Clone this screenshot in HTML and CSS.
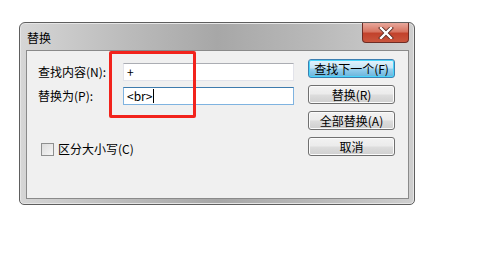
FILE: index.html
```html
<!DOCTYPE html>
<html lang="zh-CN">
<head>
  <meta charset="UTF-8" />
  <title>替换</title>
  <link rel="stylesheet" href="styles.css">
</head>
<body>
  <div class="window">
    <div class="title-bar">
      <span class="title">替换</span>
      <div class="close-btn">
        <svg width="16" height="12" viewBox="0 0 16 12">
          <path d="M3 1 L13 11 M13 1 L3 11" stroke="#5a2a22" stroke-width="4" stroke-linecap="square"></path>
          <path d="M3 1 L13 11 M13 1 L3 11" stroke="#ffffff" stroke-width="2.4" stroke-linecap="square"></path>
        </svg>
      </div>
    </div>

    <div class="client">
      <div class="form-col">
        <div class="row">
          <label class="field-label">查找内容(N):</label>
          <div class="textbox">+</div>
        </div>
        <div class="row">
          <label class="field-label">替换为(P):</label>
          <div class="textbox focused">&lt;br&gt;<span class="caret"></span></div>
        </div>
        <div class="check-row">
          <span class="checkbox"></span>
          <span>区分大小写(C)</span>
        </div>
      </div>
      <div class="button-col">
        <button class="default">查找下一个(F)</button>
        <button>替换(R)</button>
        <button>全部替换(A)</button>
        <button>取消</button>
      </div>
    </div>

    <!-- highlight drawn over the screenshot -->
    <div class="mark"></div>
  </div>
</body>
</html>
```

FILE: styles.css
```css
body {
  margin: 0;
  background: #ffffff;
  font-family: "Noto Sans CJK SC", "DejaVu Sans", sans-serif;
  font-size: 12px;
  color: #000;
}
.window {
  position: relative;
  margin: 22px 0 0 19px;
  width: 394px;
  height: 181px;
  border: 1px solid #5e5e5e;
  border-radius: 6px 6px 5px 5px;
  background: linear-gradient(90deg, #d6d6d6 0%, #bdbdbd 25%, #a7a7a7 50%, #b9b9b9 75%, #cfcfcf 100%);
  box-shadow: inset 0 0 0 1px #e6e6e6;
  padding: 0 5px 5px 6px;
  box-sizing: border-box;
  width: 396px;
  height: 183px;
}
.title-bar {
  height: 27px;
  display: flex;
  justify-content: space-between;
  align-items: flex-start;
}
.title {
  margin: 8px 0 0 1px;
  font-size: 12px;
  line-height: 14px;
}
.close-btn {
  width: 45px;
  height: 19px;
  margin-right: 0;
  border: 1px solid #6e2c24;
  border-top: none;
  border-radius: 0 0 4px 4px;
  background: linear-gradient(180deg, #e8a89c 0%, #d77562 45%, #c2422c 55%, #c9553d 100%);
  display: flex;
  align-items: center;
  justify-content: center;
}
.client {
  display: flex;
  height: 149px;
  box-sizing: border-box;
  background: #f0f0f0;
  border: 1px solid #8a8a8a;
  padding-top: 8px;
}
.form-col {
  width: 267px;
  padding: 4px 0 0 11px;
  box-sizing: border-box;
}
.row {
  display: flex;
  align-items: center;
  height: 18px;
  margin-bottom: 6px;
}
.field-label {
  width: 85px;
  line-height: 14px;
}
.textbox {
  flex: 1;
  height: 18px;
  box-sizing: border-box;
  background: #fff;
  border: 1px solid #e2e3ea;
  border-top-color: #abadb3;
  padding: 0 3px;
  line-height: 16px;
  display: flex;
  align-items: center;
}
.textbox.focused {
  border-color: #7fb3e0;
  border-top-color: #3d7bad;
}
.caret {
  display: inline-block;
  width: 1px;
  height: 14px;
  background: #000;
  margin-left: 1px;
}
.check-row {
  display: flex;
  align-items: center;
  margin: 37px 0 0 3px;
  line-height: 14px;
}
.checkbox {
  width: 11px;
  height: 11px;
  border: 1px solid #8e8f8f;
  background: linear-gradient(135deg, #dcdcdc, #f6f6f6);
  margin-right: 4px;
}
.button-col {
  margin-left: 14px;
  display: flex;
  flex-direction: column;
  gap: 7px;
}
button {
  width: 87px;
  height: 19px;
  padding: 0;
  font-family: inherit;
  font-size: 12px;
  line-height: 14px;
  color: #000;
  border: 1px solid #707070;
  border-radius: 3px;
  background: linear-gradient(180deg, #f2f2f2 0%, #ebebeb 48%, #dddddd 52%, #cfcfcf 100%);
  box-shadow: inset 0 0 0 1px #fbfbfb;
}
button.default {
  border-color: #3c7fb1;
  background: linear-gradient(180deg, #e5f4fc 0%, #c4e5f6 48%, #98d1ef 52%, #68b3db 100%);
  box-shadow: inset 0 0 0 1px #48d6fb;
}
.mark {
  position: absolute;
  left: 89px;
  top: 28px;
  width: 81px;
  height: 61px;
  border: 3px solid #f2231c;
  border-radius: 2px;
}
```
